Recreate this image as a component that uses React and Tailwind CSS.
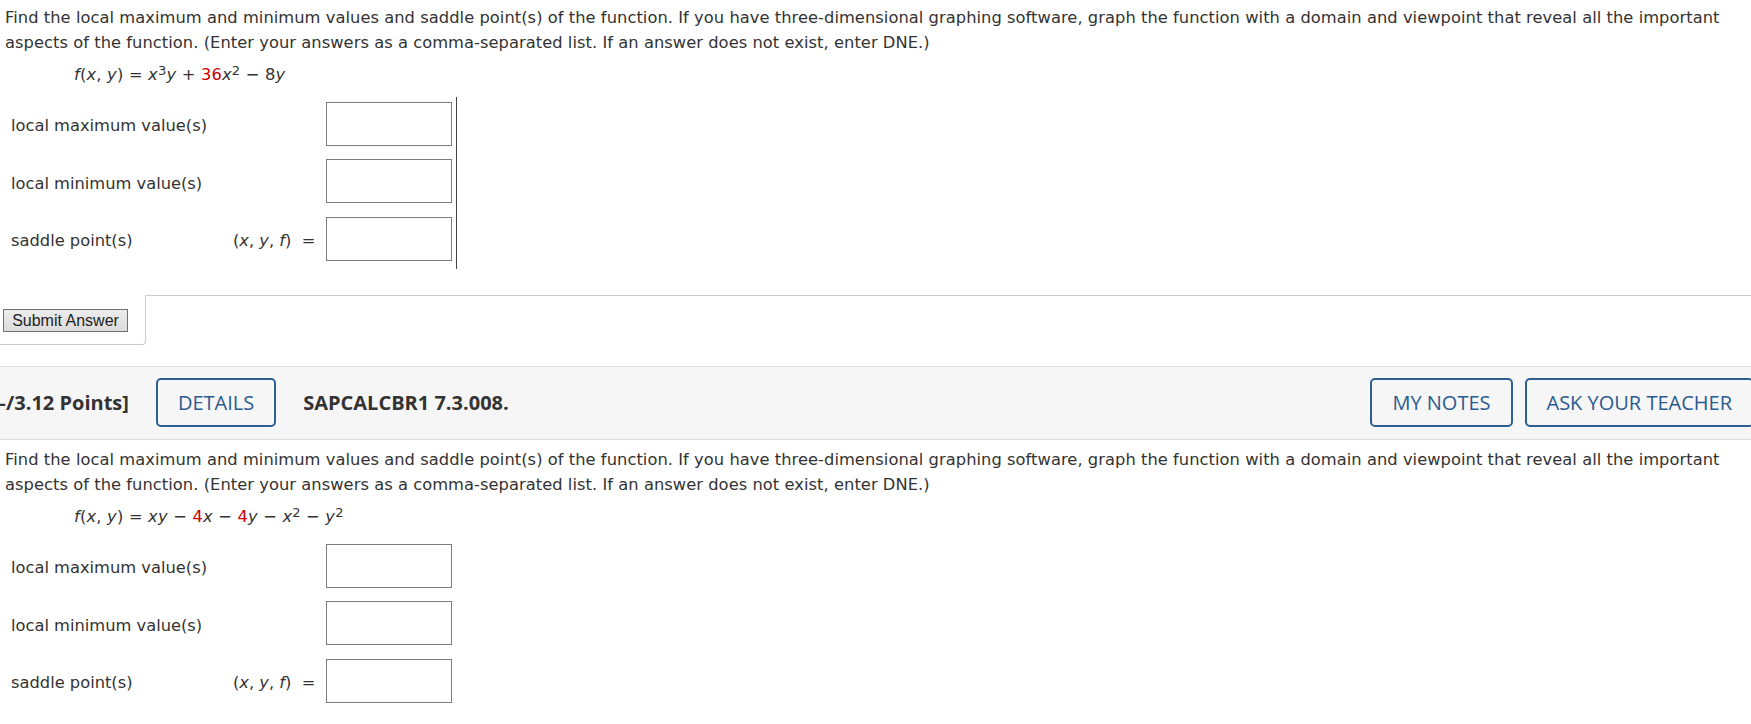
import React from "react";

const F = ({ children }) => <i className="italic">{children}</i>;
const Sup = ({ children }) => (
  <sup className="text-[0.8em] relative top-[-0.35em] align-baseline">{children}</sup>
);
const Red = ({ children }) => <span className="text-[#cc0000]">{children}</span>;

function AnswerRows({ withLine }) {
  const rows = [
    { label: "local maximum value(s)", mid: null },
    { label: "local minimum value(s)", mid: null },
    { label: "saddle point(s)", mid: true },
  ];
  return (
    <div
      className={
        "inline-flex flex-col gap-[13.5px] pt-[5px] pb-[8px] pr-[4px] " +
        (withLine ? "border-r border-[#444]" : "border-r border-transparent")
      }
    >
      {rows.map((r, i) => (
        <div key={i} className="flex items-center h-[44px]">
          <div className="w-[233px] pl-[11px] pt-[6px]">{r.label}</div>
          <div className="w-[93px] pt-[5px]">
            {r.mid ? (
              <span>
                (<F>x</F>, <F>y</F>, <F>f</F>)&nbsp; =
              </span>
            ) : null}
          </div>
          <div className="w-[126px] h-[44px] border border-[#7d7d7d] bg-white" />
        </div>
      ))}
    </div>
  );
}

function Question({ formula, withLine, top }) {
  return (
    <div className={top}>
      <p className="pl-[5px] pr-[10px] leading-[25px] tracking-[0.05px]">
        Find the local maximum and minimum values and saddle point(s) of the function. If you have
        three-dimensional graphing software, graph the function with a domain and viewpoint that
        reveal all the important aspects of the function. (Enter your answers as a comma-separated
        list. If an answer does not exist, enter DNE.)
      </p>
      <div className="pl-[74px] mt-[7.5px] leading-[25px] whitespace-nowrap tracking-[0.2px]">{formula}</div>
      <div className="mt-[9.5px]">
        <AnswerRows withLine={withLine} />
      </div>
    </div>
  );
}

export default function App() {
  const body = { fontFamily: '"DejaVu Sans", Verdana, sans-serif' };
  const os = { fontFamily: '"Open Sans", sans-serif' };
  return (
    <div
      className="w-[1751px] h-[724px] overflow-hidden bg-white text-[#333] text-[16.3px]"
      style={body}
    >
      <Question
        top="pt-[4.5px]"
        withLine
        formula={
          <span>
            <F>f</F>(<F>x</F>, <F>y</F>) = <F>x</F>
            <Sup>3</Sup>
            <F>y</F> + <Red>36</Red>
            <F>x</F>
            <Sup>2</Sup> − 8<F>y</F>
          </span>
        }
      />

      {/* submit area */}
      <div className="flex mt-[26px] h-[50px]">
        <div className="w-[146px] shrink-0 h-[50px] border-r border-b border-[#cccccc] rounded-br-[4px] flex items-center pl-[3px] pt-[3px]">
          <button
            className="h-[23px] w-[125px] border border-[#707070] bg-gradient-to-b from-[#ececec] to-[#dcdcdc] text-[16px] text-[#222] leading-none"
            style={{ fontFamily: '"Liberation Sans", Arial, sans-serif' }}
          >
            Submit Answer
          </button>
        </div>
        <div className="flex-1 border-t border-[#cccccc]" />
      </div>

      {/* band */}
      <div className="mt-[21px] h-[74px] bg-[#f6f6f6] border-t border-b border-[#dddddd]">
        <div className="flex items-center h-full w-[1754px]" style={os}>
          <span className="ml-[-4px] font-bold text-[20px] text-[#333]">–/3.12 Points]</span>
          <button className="ml-[27px] h-[49px] px-[20px] border-2 border-[#2d5f95] rounded-[5px] text-[20px] text-[#2b5b90]">
            DETAILS
          </button>
          <span className="ml-[27px] font-bold text-[20px] text-[#333]">SAPCALCBR1 7.3.008.</span>
          <div className="flex-1" />
          <button className="h-[49px] px-[20px] border-2 border-[#2d5f95] rounded-[5px] text-[20px] text-[#2b5b90] whitespace-nowrap">
            MY NOTES
          </button>
          <button className="ml-[12px] h-[49px] px-[20px] border-2 border-[#2d5f95] rounded-[5px] text-[20px] text-[#2b5b90] whitespace-nowrap">
            ASK YOUR TEACHER
          </button>
        </div>
      </div>

      <Question
        top="pt-[7px]"
        withLine={false}
        formula={
          <span>
            <F>f</F>(<F>x</F>, <F>y</F>) = <F>xy</F> − <Red>4</Red>
            <F>x</F> − <Red>4</Red>
            <F>y</F> − <F>x</F>
            <Sup>2</Sup> − <F>y</F>
            <Sup>2</Sup>
          </span>
        }
      />
    </div>
  );
}
